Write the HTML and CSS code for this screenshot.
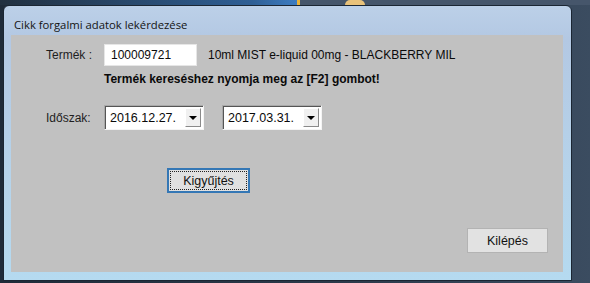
FILE: index.html
```html
<!DOCTYPE html>
<html>
<head>
<meta charset="utf-8">
<link rel="stylesheet" href="styles.css">
</head>
<body>
<div class="desktop">
  <div class="strip">
    <span class="bit-blue"></span><span class="bit-yellow"></span><span class="bit-gap"></span><span class="bit-orange"></span>
  </div>
  <div class="window">
    <div class="titlebar">Cikk forgalmi adatok lekérdezése</div>
    <div class="client">
      <div class="row row-product">
        <span class="label">Termék :</span>
        <span class="textbox">100009721</span>
        <span class="desc">10ml MIST e-liquid 00mg - BLACKBERRY MIL</span>
      </div>
      <div class="hint">Termék kereséshez nyomja meg az [F2] gombot!</div>
      <div class="row row-period">
        <span class="label">Időszak:</span>
        <span class="datepicker"><span class="datetext">2016.12.27.</span><span class="dropbtn"><span class="arrow"></span></span></span>
        <span class="datepicker second"><span class="datetext">2017.03.31.</span><span class="dropbtn"><span class="arrow"></span></span></span>
      </div>
      <div class="btn btn-primary"><span class="focus">Kigyűjtés</span></div>
      <div class="btn btn-exit">Kilépés</div>
    </div>
  </div>
</div>
</body>
</html>
```
FILE: styles.css
```css
html, body {
  margin: 0;
  padding: 0;
}
body {
  width: 590px;
  height: 283px;
  overflow: hidden;
  background: linear-gradient(90deg, #1f2b39 0%, #2c3a4b 60%, #3b4c60 100%);
  font-family: "Liberation Sans", Arial, sans-serif;
}
.desktop {
  width: 590px;
  height: 283px;
}
.strip {
  height: 5px;
  display: flex;
  background: #46566b;
}
.bit-blue {
  width: 297px;
  background: linear-gradient(90deg, #22303f 0%, #2f5f95 85%, #3d7dc2 100%);
}
.bit-yellow {
  width: 3px;
  background: #e8b23a;
}
.bit-gap {
  width: 45px;
}
.bit-orange {
  width: 20px;
  background: #e9c27a;
  border-radius: 6px 6px 0 0;
}
.window {
  margin-left: 3px;
  width: 569px;
  height: 276px;
  border: 1px solid #1b2633;
  border-radius: 6px 6px 0 0;
  background: linear-gradient(180deg, #bcd0e8 0%, #b3c8e3 12%, #b6d3ea 60%, #b5daf0 100%);
  display: flex;
  flex-direction: column;
  box-sizing: border-box;
}
.titlebar {
  height: 29px;
  box-sizing: border-box;
  padding: 11px 0 0 10px;
  font-family: "Open Sans", "Noto Sans", sans-serif;
  font-size: 11.3px;
  line-height: 16px;
  color: #141414;
  flex: none;
}
.client {
  margin: 0 8px 8px 7px;
  flex: 1;
  background: #c1c1c1;
  display: flex;
  flex-direction: column;
  font-size: 12px;
  color: #0a0a0a;
  padding-left: 35px;
}
.row {
  display: flex;
  align-items: center;
}
.label {
  width: 58px;
  color: #1e1e1e;
}
.row-product {
  margin-top: 9px;
  height: 22px;
}
.textbox {
  width: 93px;
  height: 22px;
  background: #fff;
  box-sizing: border-box;
  border: 1px solid #e6e6e6;
  padding-left: 6px;
  line-height: 20px;
}
.desc {
  margin-left: 11px;
}
.hint {
  margin-top: 4px;
  margin-left: 58px;
  height: 18px;
  line-height: 18px;
  font-weight: bold;
  font-size: 12px;
}
.row-period {
  margin-top: 17px;
  height: 25px;
}
.row-period .label {
  width: 58px;
}
.datepicker {
  width: 100px;
  height: 25px;
  box-sizing: border-box;
  border: 1px solid;
  border-color: #a9a9a9 #f4f4f4 #f4f4f4 #a9a9a9;
  background: #fff;
  display: flex;
  align-items: center;
  box-shadow: inset 1px 1px 0 #555;
}
.datepicker.second {
  margin-left: 18px;
}
.datetext {
  flex: 1;
  padding-left: 5px;
  font-size: 12.5px;
}
.dropbtn {
  width: 16px;
  height: 19px;
  margin-right: 2px;
  box-sizing: border-box;
  background: #f0f0f0;
  border: 1px solid;
  border-color: #ffffff #8a8a8a #8a8a8a #ffffff;
  display: flex;
  align-items: center;
  justify-content: center;
}
.arrow {
  width: 0;
  height: 0;
  border-left: 4px solid transparent;
  border-right: 4px solid transparent;
  border-top: 4px solid #000;
}
.btn {
  box-sizing: border-box;
  height: 25px;
  background: #e0e0e0;
  display: flex;
  align-items: center;
  justify-content: center;
  font-size: 12.5px;
  color: #111;
}
.btn-primary {
  margin-top: 38px;
  margin-left: 121px;
  width: 83px;
  border: 2px solid #3477b5;
  padding: 1px;
}
.focus {
  display: flex;
  align-items: center;
  justify-content: center;
  width: 100%;
  height: 100%;
  border: 1px dotted #222;
  box-sizing: border-box;
}
.btn-exit {
  margin-top: 35px;
  align-self: flex-end;
  margin-right: 15px;
  width: 81px;
  border: 1px solid #b3b3b3;
  background: #e2e2e2;
}
```
